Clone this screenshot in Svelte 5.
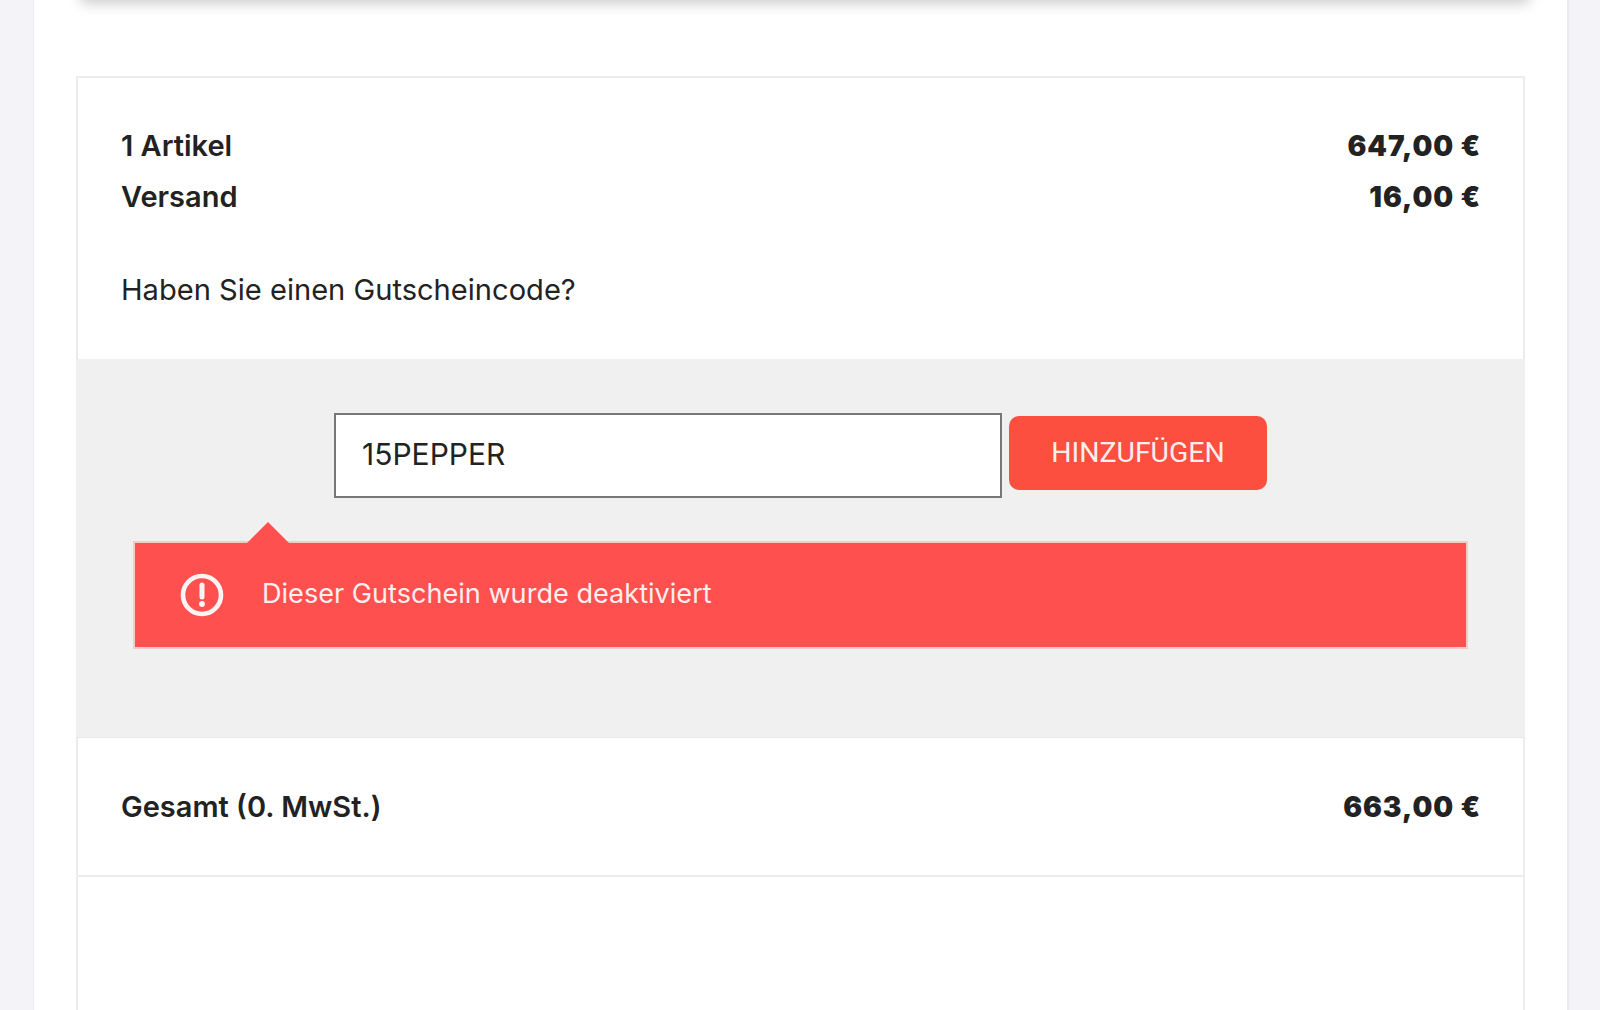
<script>
	const rows = [
		{ label: '1 Artikel', price: '647,00 €' },
		{ label: 'Versand', price: '16,00 €' }
	];
</script>

<div class="page">
	<div class="sheet">
		<div class="topcard"></div>

		<section class="summary">
			<div class="lines">
				{#each rows as row}
					<div class="row">
						<span class="label">{row.label}</span>
						<span class="price">{row.price}</span>
					</div>
				{/each}
				<p class="question">Haben Sie einen Gutscheincode?</p>
			</div>

			<div class="coupon">
				<div class="coupon-form">
					<input class="code" type="text" value="15PEPPER" />
					<button class="add">HINZUFÜGEN</button>
				</div>
				<div class="alert">
					<svg class="alert-icon" viewBox="0 0 44 44" width="44" height="44" fill="none">
						<circle cx="22" cy="22" r="19" stroke="#fff3f3" stroke-width="4.6" />
						<path d="M22 12v12" stroke="#fff3f3" stroke-width="5" stroke-linecap="round" />
						<circle cx="22" cy="31" r="2.9" fill="#fff3f3" />
					</svg>
					<span class="alert-text">Dieser Gutschein wurde deaktiviert</span>
				</div>
			</div>

			<div class="row total">
				<span class="label">Gesamt (0. MwSt.)</span>
				<span class="price">663,00 €</span>
			</div>
			<div class="rest"></div>
		</section>
	</div>
</div>

<style>
	:global(body) {
		margin: 0;
		background: #f3f3f8;
	}

	.page {
		height: 1010px;
		overflow: hidden;
		padding-left: 33px;
		font-family: Inter, 'Liberation Sans', sans-serif;
		color: #222;
	}

	.sheet {
		box-sizing: border-box;
		display: flow-root;
		width: 1536px;
		height: 1010px;
		background: #fff;
		border-left: 1px solid #eaeaf0;
		border-right: 2px solid #eaeaf0;
		padding: 0 42px;
	}

	.topcard {
		height: 20px;
		margin: -20px -4px 76px 5px;
		background: #fff;
		box-shadow: 0 3px 14px rgba(0, 0, 0, 0.22);
	}

	.summary {
		width: 1449px;
		height: 934px;
		box-sizing: border-box;
		border: 2px solid #ececec;
		border-bottom: 0;
	}

	.lines {
		padding: 42px 42px 0 43px;
		height: 281px;
		box-sizing: border-box;
	}

	.row {
		display: flex;
		justify-content: space-between;
		align-items: center;
		height: 51px;
	}

	.label {
		font-size: 29px;
		font-weight: 600;
	}

	.price {
		font-size: 28px;
		font-weight: 900;
		letter-spacing: 0.9px;
	}

	.question {
		margin: 42px 0 0;
		font-size: 29.1px;
		line-height: 51px;
	}

	.coupon {
		margin: 0 -2px;
		height: 379px;
		box-sizing: border-box;
		background: #f0f0f0;
		border-bottom: 1px solid #e8e8e8;
		padding-top: 54px;
	}

	.coupon-form {
		display: flex;
		align-items: center;
		gap: 7px;
		padding-left: 258px;
	}

	.code {
		box-sizing: border-box;
		width: 668px;
		height: 85px;
		border: 2px solid #777;
		background: #fff;
		padding: 0 26px 3px;
		font: 400 30px Inter, sans-serif;
		color: #222;
		border-radius: 0;
		outline: none;
	}

	.add {
		width: 258px;
		height: 74px;
		margin-top: -5px;
		padding-bottom: 3px;
		border: 0;
		border-radius: 10px;
		background: #fc4f3f;
		color: #fdeeee;
		font: 400 28.4px Roboto, sans-serif;
	}

	.alert {
		position: relative;
		box-sizing: border-box;
		display: flex;
		align-items: center;
		gap: 38px;
		margin: 43px 0 0 57px;
		width: 1335px;
		height: 108px;
		padding-left: 45px;
		background: #ff5050;
		border: 2px solid #f6c9c9;
		color: #ffeeee;
		font-size: 27.1px;
	}

	.alert-text {
		margin-top: -4px;
	}

	.alert::before {
		content: '';
		position: absolute;
		left: 112px;
		top: -21px;
		width: 0;
		height: 0;
		border-left: 21px solid transparent;
		border-right: 21px solid transparent;
		border-bottom: 21px solid #ff5050;
	}

	.total {
		height: 139px;
		padding: 0 42px 0 43px;
		border-bottom: 2px solid #ececec;
		box-sizing: border-box;
	}

	.rest {
		height: 140px;
	}
</style>
